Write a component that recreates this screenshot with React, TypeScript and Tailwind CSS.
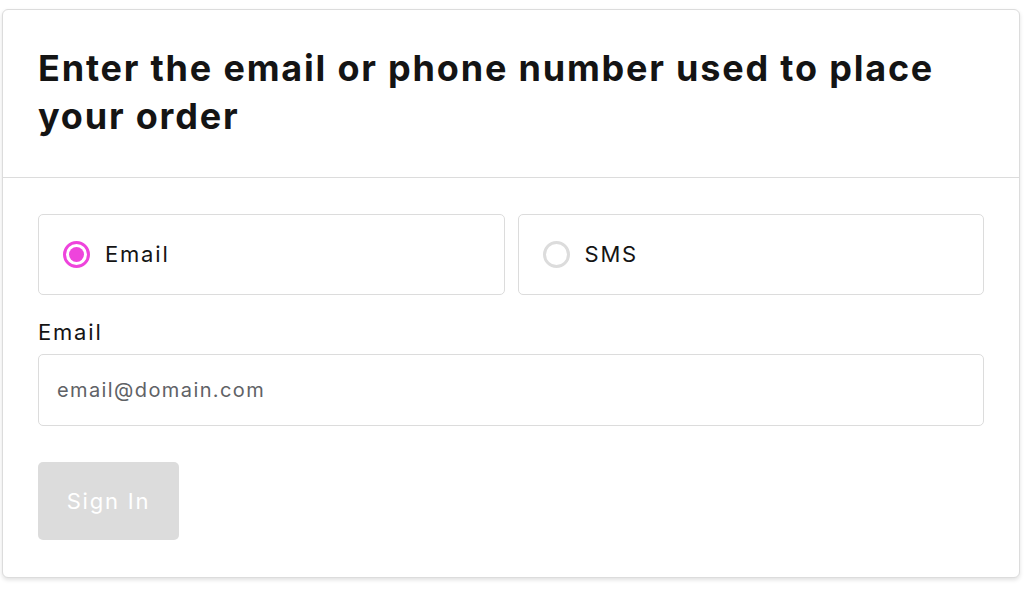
import React, { useState } from "react";

export default function App() {
  const [mode, setMode] = useState<"email" | "sms">("email");
  return (
    <div className="w-[1027px] h-[592px] bg-white pt-[9px] pl-[2px] pr-[7px]" style={{ fontFamily: "Inter, 'Noto Sans', sans-serif" }}>
      <div className="border border-[#dcdcdc] rounded-[6px] bg-white shadow-[0_2px_4px_rgba(0,0,0,0.12)] h-[569px]">
        <div className="px-[35px] pt-[34px] pb-[37px] border-b border-[#dcdcdc]">
          <h1 className="max-w-[910px] text-[36px] leading-[48px] font-bold text-[#141414] tracking-[1.8px]">
            Enter the email or phone number used to place your order
          </h1>
        </div>
        <div className="px-[35px] pt-[36px]">
          <div className="grid grid-cols-2 gap-[13px]">
            <button
              onClick={() => setMode("email")}
              className="h-[81px] border border-[#dcdcdc] rounded-[5px] flex items-center pl-[24px] gap-[15px] text-left"
            >
              <span className={`w-[27px] h-[27px] rounded-full border-[3px] flex items-center justify-center ${mode === "email" ? "border-[#ee44dc]" : "border-[#dcdcdc]"}`}>
                {mode === "email" && <span className="w-[15px] h-[15px] rounded-full bg-[#ee44dc]" />}
              </span>
              <span className="text-[22px] text-[#141414] tracking-[1.8px]">Email</span>
            </button>
            <button
              onClick={() => setMode("sms")}
              className="h-[81px] border border-[#dcdcdc] rounded-[5px] flex items-center pl-[24px] gap-[15px] text-left"
            >
              <span className={`w-[27px] h-[27px] rounded-full border-[3px] flex items-center justify-center ${mode === "sms" ? "border-[#ee44dc]" : "border-[#dcdcdc]"}`}>
                {mode === "sms" && <span className="w-[15px] h-[15px] rounded-full bg-[#ee44dc]" />}
              </span>
              <span className="text-[22px] text-[#141414] tracking-[1.8px]">SMS</span>
            </button>
          </div>
          <label className="block mt-[21px] text-[22px] leading-[33px] text-[#141414] tracking-[1.8px]">Email</label>
          <input
            placeholder="email@domain.com"
            className="mt-[5px] block w-full h-[72px] border border-[#dcdcdc] rounded-[5px] px-[18px] text-[20px] tracking-[1.4px] placeholder:text-[#5f6266] outline-none"
          />
          <button className="mt-[36px] w-[141px] h-[78px] bg-[#dcdcdc] rounded-[5px] text-white text-[22px] tracking-[1.8px]">
            Sign In
          </button>
        </div>
      </div>
    </div>
  );
}
